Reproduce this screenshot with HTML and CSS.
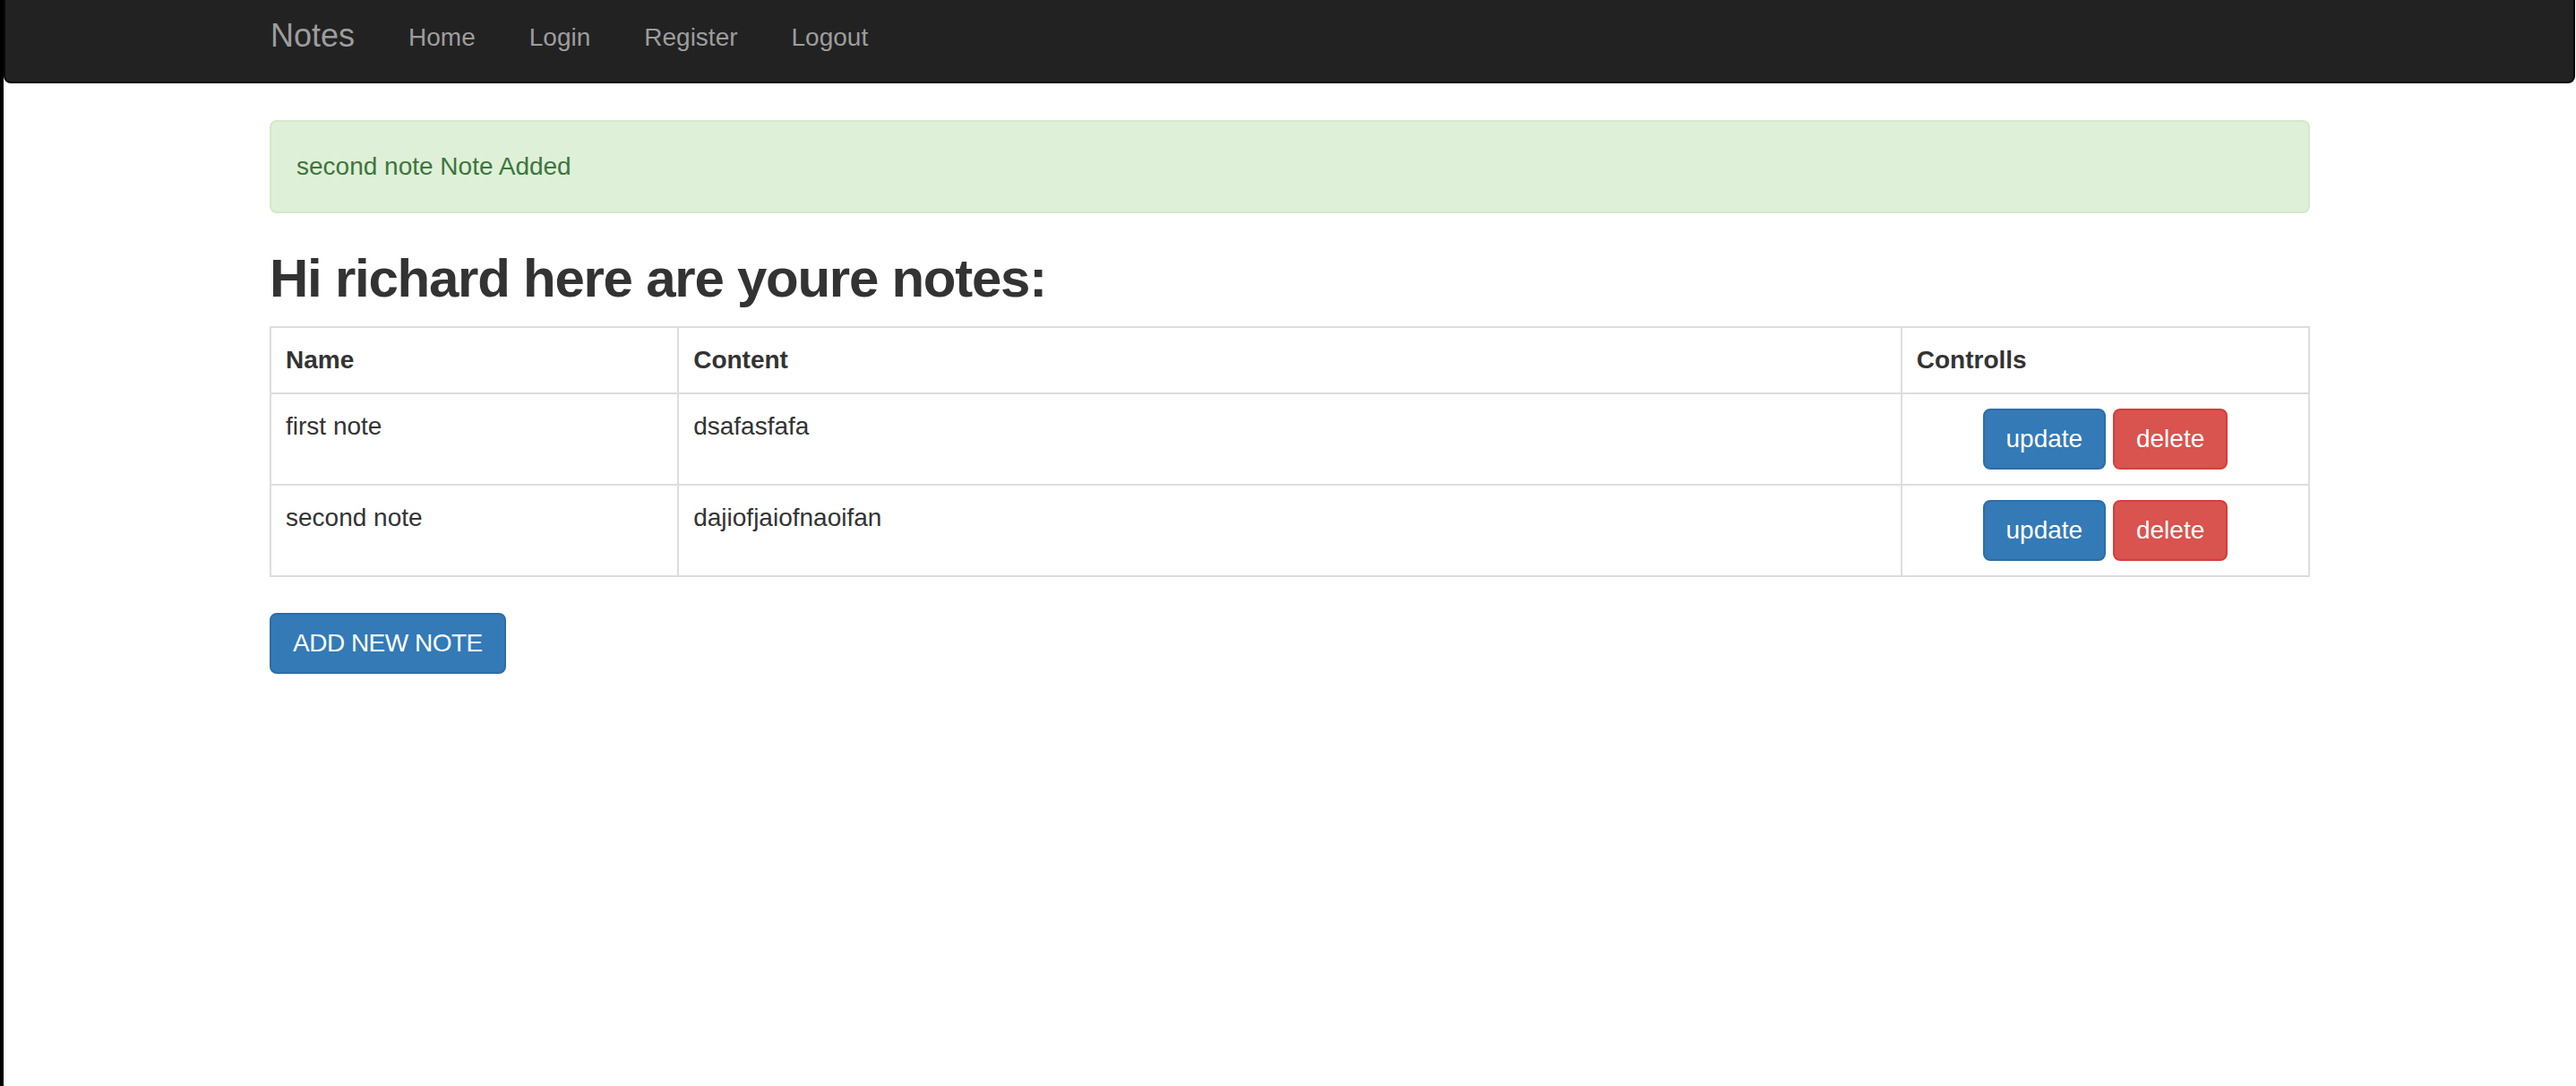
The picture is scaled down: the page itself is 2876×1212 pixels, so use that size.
FILE: index.html
```html
<!DOCTYPE html>
<html lang="en">
<head>
<meta charset="utf-8">
<title>Notes</title>
<link rel="stylesheet" href="styles.css">
</head>
<body>
<div class="page">
  <nav class="navbar">
    <div class="container nav-inner">
      <a class="brand" href="#">Notes</a>
      <ul class="nav-links">
        <li><a href="#">Home</a></li>
        <li><a href="#">Login</a></li>
        <li><a href="#">Register</a></li>
        <li><a href="#">Logout</a></li>
      </ul>
    </div>
  </nav>
  <main class="container">
    <div class="alert">second note Note Added</div>
    <h2 class="title">Hi richard here are youre notes:</h2>
    <table class="notes">
      <thead>
        <tr>
          <th class="col-name">Name</th>
          <th class="col-content">Content</th>
          <th class="col-ctrl">Controlls</th>
        </tr>
      </thead>
      <tbody>
        <tr>
          <td>first note</td>
          <td>dsafasfafa</td>
          <td class="ctrl"><a class="btn btn-primary" href="#">update</a> <a class="btn btn-danger" href="#">delete</a></td>
        </tr>
        <tr>
          <td>second note</td>
          <td>dajiofjaiofnaoifan</td>
          <td class="ctrl"><a class="btn btn-primary" href="#">update</a> <a class="btn btn-danger" href="#">delete</a></td>
        </tr>
      </tbody>
    </table>
    <a class="btn btn-primary btn-add" href="#">ADD NEW NOTE</a>
  </main>
</div>
</body>
</html>
```
FILE: styles.css
```css
* { box-sizing: border-box; }
html, body {
  margin: 0;
  padding: 0;
  background: #fff;
}
body {
  font-family: "Liberation Sans", Arial, Helvetica, sans-serif;
  font-size: 28px;
  line-height: 40px;
  color: #333;
}
.page {
  min-height: 1212px;
  border-left: 4px solid #000;
  padding-right: 1px;
}
a { text-decoration: none; }

.navbar {
  height: 93px;
  background: #222;
  border: 2px solid #080808;
  border-top: none;
  border-radius: 0 0 8px 8px;
  margin-bottom: 41px;
}
.container {
  width: 2278px;
  margin-left: 297px;
}
.nav-inner {
  display: flex;
  align-items: flex-start;
}
.brand {
  display: block;
  color: #9d9d9d;
  font-size: 36px;
  line-height: 40px;
  padding-top: 20px;
  padding-right: 30px;
  margin-left: -1px;
}
.nav-links {
  list-style: none;
  margin: 0;
  padding: 0;
  display: flex;
}
.nav-links a {
  display: block;
  color: #9d9d9d;
  font-size: 28px;
  line-height: 40px;
  padding: 22px 30px 0;
}

.alert {
  background: #dff0d8;
  border: 2px solid #d6e9c6;
  color: #3c763d;
  border-radius: 8px;
  padding: 30px 28px;
  margin-bottom: 40px;
}
.title {
  font-size: 60px;
  line-height: 66px;
  font-weight: bold;
  letter-spacing: -1.25px;
  margin: 40px 0 20px;
  color: #333;
}

.notes {
  width: 100%;
  border-collapse: collapse;
  margin-bottom: 40px;
}
.notes th, .notes td {
  border: 2px solid #ddd;
  padding: 16px;
  text-align: left;
  vertical-align: top;
  line-height: 40px;
}
.notes th { font-weight: bold; }
.col-name { width: 20%; }
.col-content { width: 60%; }
.col-ctrl { width: 20%; }
.notes td.ctrl { text-align: center; }

.btn {
  display: inline-block;
  font-size: 28px;
  line-height: 40px;
  padding: 12px 24px;
  border: 2px solid transparent;
  border-radius: 8px;
  color: #fff;
  vertical-align: middle;
  white-space: nowrap;
}
.btn-primary {
  background: #337ab7;
  border-color: #2e6da4;
}
.btn-danger {
  background: #d9534f;
  border-color: #d43f3a;
}
.btn-add {
  letter-spacing: -0.5px;
}
```
